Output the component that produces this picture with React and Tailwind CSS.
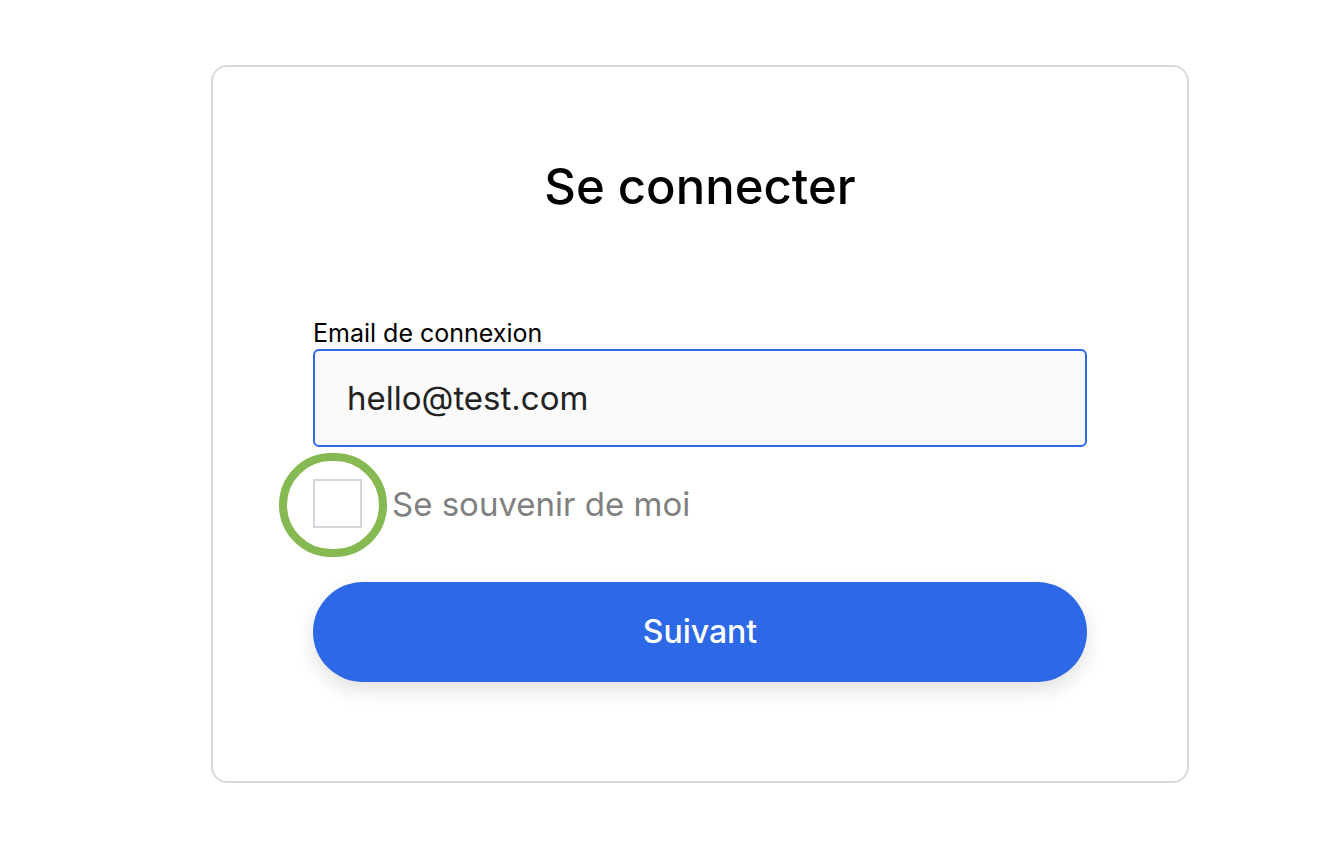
export default function App() {
    return (
        <div className="min-h-screen bg-white pt-[65px] pl-[211px]" style={{ fontFamily: 'Inter, "Noto Sans", sans-serif' }}>
            <div className="w-[978px] h-[718px] rounded-2xl border-2 border-[#dadada] px-[100px] flex flex-col">
                <h1 className="mt-[92px] text-center text-[49px] leading-[56px] font-medium text-black">Se connecter</h1>

                <label className="mt-[104px] text-[25px] leading-[28px] text-black">Email de connexion</label>
                <div className="mt-[2px] h-[98px] rounded-md border-2 border-[#2d68e6] bg-[#fafafa] flex items-center px-[32px]">
                    <span className="text-[33px] leading-[40px] text-[#222]">hello@test.com</span>
                </div>

                <div className="relative mt-[32px] flex items-center gap-[30px]">
                    <div className="w-[49px] h-[49px] border-2 border-[#d4d7dc] bg-white"></div>
                    <span className="text-[33px] leading-[40px] text-[#808080]">Se souvenir de moi</span>
                    <div className="absolute left-[-34px] top-[-26px] w-[108px] h-[104px] rounded-full border-[8px] border-[#86b952]"></div>
                </div>

                <button className="mt-[54px] h-[100px] rounded-full bg-[#2d68e6] text-white text-[32px] font-medium shadow-[0_8px_20px_rgba(0,0,0,0.12)]">
                    Suivant
                </button>
            </div>
        </div>
    );
}
